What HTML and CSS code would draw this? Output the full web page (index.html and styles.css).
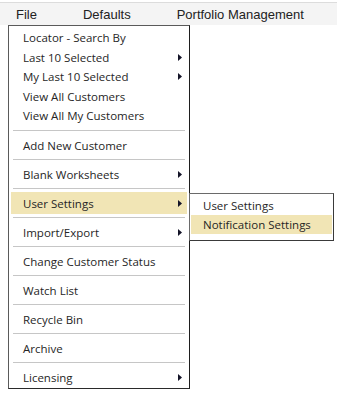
FILE: index.html
```html
<!DOCTYPE html>
<html lang="en">
<head>
  <meta charset="UTF-8" />
  <title>File menu</title>
  <link rel="stylesheet" href="styles.css">
</head>
<body>
  <nav class="menubar">
    <span class="top-item">File</span>
    <span class="top-item">Defaults</span>
    <span class="top-item">Portfolio Management</span>
  </nav>

  <ul class="menu">
    <li class="item small">Locator - Search By</li>
    <li class="item small">Last 10 Selected <svg class="arrow" width="4" height="7" viewBox="0 0 4 7"><path d="M0 0L4 3.5L0 7Z"/></svg></li>
    <li class="item small">My Last 10 Selected <svg class="arrow" width="4" height="7" viewBox="0 0 4 7"><path d="M0 0L4 3.5L0 7Z"/></svg></li>
    <li class="item small">View All Customers</li>
    <li class="item small">View All My Customers</li>
    <li class="sep first"></li>
    <li class="item">Add New Customer</li>
    <li class="sep"></li>
    <li class="item">Blank Worksheets <svg class="arrow" width="4" height="7" viewBox="0 0 4 7"><path d="M0 0L4 3.5L0 7Z"/></svg></li>
    <li class="sep"></li>
    <li class="item active">User Settings <svg class="arrow" width="4" height="7" viewBox="0 0 4 7"><path d="M0 0L4 3.5L0 7Z"/></svg>
      <ul class="submenu">
        <li class="sub-item">User Settings</li>
        <li class="sub-item active">Notification Settings</li>
      </ul>
    </li>
    <li class="sep"></li>
    <li class="item">Import/Export <svg class="arrow" width="4" height="7" viewBox="0 0 4 7"><path d="M0 0L4 3.5L0 7Z"/></svg></li>
    <li class="sep"></li>
    <li class="item">Change Customer Status</li>
    <li class="sep"></li>
    <li class="item">Watch List</li>
    <li class="sep"></li>
    <li class="item">Recycle Bin</li>
    <li class="sep"></li>
    <li class="item">Archive</li>
    <li class="sep"></li>
    <li class="item">Licensing <svg class="arrow" width="4" height="7" viewBox="0 0 4 7"><path d="M0 0L4 3.5L0 7Z"/></svg></li>
  </ul>
</body>
</html>
```

FILE: styles.css
```css
body {
  margin: 0;
  background: white;
  font-family: "Open Sans", "DejaVu Sans", sans-serif;
  position: relative;
  height: 393px;
  overflow: hidden;
}

.menubar {
  display: flex;
  gap: 46px;
  align-items: center;
  margin-top: 2px;
  height: 22px;
  padding-left: 16px;
  background: #f4f4f4;
  border-top: 1px solid #dcdcdc;
  font-family: "Liberation Sans", Arial, sans-serif;
  font-size: 13px;
  color: #222;
}

.menu {
  position: absolute;
  left: 8px;
  top: 25px;
  width: 176px;
  margin: 0;
  padding: 2px 2px 0 2px;
  list-style: none;
  background: white;
  border: 1px solid #5a5a5a;
  border-right-color: #1e1e1e;
  border-bottom-color: #2a2a2a;
  font-size: 11.5px;
  color: #262626;
}

.item {
  position: relative;
  display: flex;
  align-items: center;
  justify-content: space-between;
  height: 22px;
  padding: 0 5px 0 12px;
}

.item.small {
  height: 19.5px;
}

.item.active {
  background: #f1e5b5;
}

.arrow {
  fill: #141428;
}

.sep {
  height: 1px;
  margin: 3px 2px;
  background: #c6c6c6;
}

.sep.first {
  margin-top: 4.5px;
}

.submenu {
  position: absolute;
  left: 178px;
  top: 1px;
  width: 141px;
  margin: 0;
  padding: 1px 1px 6px 1px;
  list-style: none;
  background: white;
  border: 1px solid #6a6a6a;
  border-right-color: #3a3a3a;
  border-bottom-color: #3a3a3a;
}

.sub-item {
  display: flex;
  align-items: center;
  height: 20px;
  padding-left: 12px;
}

.sub-item.active {
  height: 19px;
  background: #f1e5b5;
}
```
